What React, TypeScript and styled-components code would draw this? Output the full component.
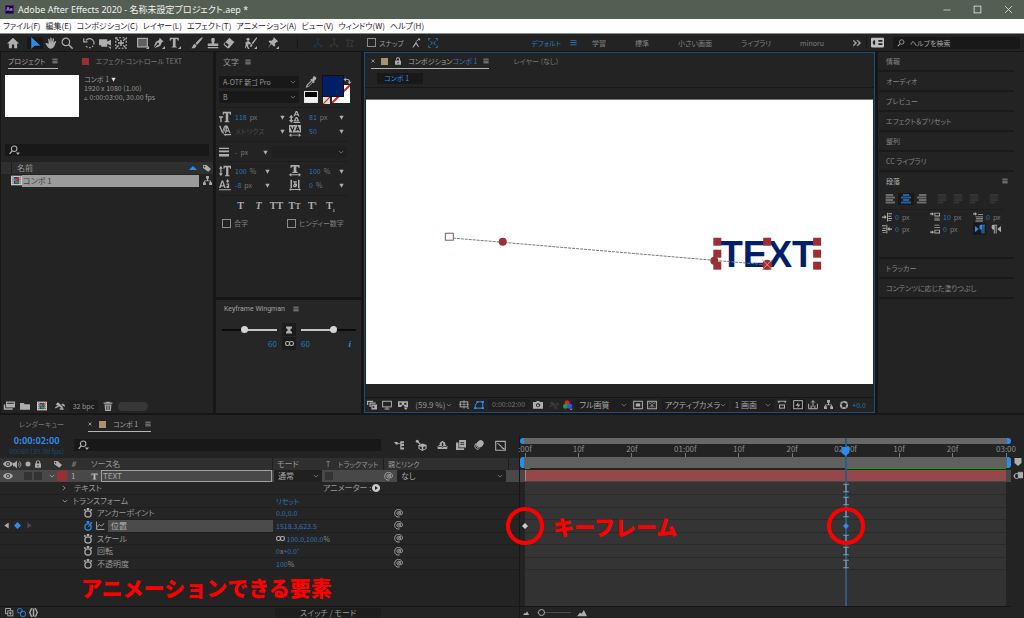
import React from "react";
import styled, { createGlobalStyle, css } from "styled-components";

const c = {
  panel: "#232323",
  gap: "#161616",
  well: "#181818",
  line: "#171717",
  head: "#2f2f2f",
  text: "#989898",
  icon: "#adadad",
  blue: "#2d8ceb",
  value: "#2b75bd",
  focus: "#1f4b78",
  red: "#ff0000",
};

const GlobalStyle = createGlobalStyle`
  * { box-sizing: border-box; }
  body {
    margin: 0;
    background: ${c.gap};
    color: ${c.text};
    font-family: "Noto Sans CJK JP", "Noto Sans", sans-serif;
    font-size: 8px;
    line-height: 12px;
    font-feature-settings: "palt";
  }
  button, input, select { font: inherit; color: inherit; font-feature-settings: inherit; }
  button { margin: 0; padding: 0; border: 0; background: none; }
`;

/* ---------- icons ---------- */

const line = { fill: "none", stroke: "currentColor", strokeWidth: 1.6 } as const;

const icons: Record<string, React.ReactNode> = {
  home: <path d="M8 1 0 8.500h2.500V15h4v-5h3v5h4V8.500H16Z" />,
  arrow: <path d="M3 0v16l4.500-4.500H15Z" />,
  hand: <path d="M5 9 4.200 3.500c-.3-1.300 1.300-1.700 1.700-.4L7 7 7 1.500c0-1.300 1.700-1.300 1.800 0L9.200 7l1.100-4.700c.4-1.200 1.900-.8 1.700.4L11.300 8l2-2.400c.9-.9 2.100-.1 1.500 1-1.500 2.500-2.200 8.400-6.800 8.900C4.200 15.700 3 12.200.8 9.300c-.6-1.200.8-1.900 1.700-1Z" />,
  zoom: <g {...line}><circle cx="6.500" cy="6.500" r="5" /><path d="m10 10 5.500 5.500" strokeWidth="2" /></g>,
  search: <g {...line}><circle cx="9.500" cy="6" r="4.500" /><path d="M6 9.500 1.500 14.500" strokeWidth="2.200" /></g>,
  searchMenu: <g><g {...line}><circle cx="7.500" cy="5.500" r="4" /><path d="M4.500 8.500 1 13" strokeWidth="2" /></g><path d="M10 11h6l-3 3.500Z" /></g>,
  rotate: <g {...line}><path d="M4 4.500A6 6 0 1 1 4 12" strokeDasharray="16 2 2 2 2 2" /><path d="M1 1.500v5h5" /></g>,
  camera: <path d="M0 3h11v3l5-2.500v8L11 9v4H3v-2H0Zm12 10h4v3Z" />,
  panBehind: <g {...line} strokeDasharray="2.500 2"><rect x="1" y="1" width="14" height="14" /><path d="M8 4v8M4 8h8" strokeWidth="2" strokeDasharray="none" /><path d="m2 2 3 3M14 2l-3 3M2 14l3-3M14 14l-3-3" strokeDasharray="none" /></g>,
  rect: <g><rect x="0.800" y="1.800" width="13" height="11.500" fill="#5f5f5f" stroke="currentColor" strokeWidth="1.500" /><path d="M16 12v4h-4Z" /></g>,
  pen: <g><path d="m9 1 5 5-2 1-2.500 5L2 15l4-4.500a1.500 1.500 0 1 0-1-1L1 14 3.500 6.500 8 4Z" /><path d="M16 12v4h-4Z" /></g>,
  type: <g><path d="M1 1h12v4h-1.200c-.3-1.700-.8-2.300-3-2.300v9c0 1 .4 1.300 1.700 1.300v1H3.500v-1c1.300 0 1.700-.3 1.700-1.300v-9c-2.200 0-2.700.6-3 2.300H1Z" /><path d="M16 12v4h-4Z" /></g>,
  glyphT: <path d="M1 1h14v4.500h-1.400c-.3-2-1-2.700-3.600-2.700v9c0 1 .4 1.400 2 1.400V15H4v-1.800c1.600 0 2-.4 2-1.400v-9c-2.600 0-3.300.7-3.600 2.700H1Z" />,
  brush: <path d="M15.500.5c1 1-6 9-7.500 10L6 8.500C7.500 6.500 14.500-.5 15.500.5ZM5.300 9.200l2 2c-.5 3-3.300 4.300-6.800 3.800C2.500 13.500 2 9.500 5.300 9.200Z" />,
  stamp: <path d="M5.500 3.500a2.500 2.500 0 1 1 5 0c0 1.500-1 2.500-1 5H15v3.500H1V8.500h5.500c0-2.500-1-3.500-1-5ZM1 13.300h14V15H1Z" />,
  eraser: <path d="m8.500 1 6.500 5.500-7 8.500H6L1 10.500V9Zm-1 9L3.500 7 2 9.500 6.500 13Z" />,
  roto: <g><circle cx="4" cy="3" r="2" /><path d="M0 8 4 5l3 2 1 2-2 1-1-1-1 3 2 4H4l-2-4-1 3H0l1-6ZM15.500 0 9 8l1.500 1.500L16 2ZM8.500 9l1.500 1.500c0 2-2 3-4 2.500 1.500-1 1-3.500 2.500-4Z" /><path d="M16 12v4h-4Z" /></g>,
  pin: <g><path d="m9 0 6 6-2 .5-2.500 2.500.5 2.500-1.500 1.500-3.500-3.500L1 15l4-6-3-3 1.500-1.500L6 5l2.500-2.500Z" /><path d="M16 12v4h-4Z" /></g>,
  axis: <g {...line}><path d="M8 1v8M8 9l-6 5M8 9l6 5" /><path d="M6 3 8 1l2 2M2 11v3h3M14 11v3h-3" /></g>,
  axisView: <g {...line}><path d="m2 3 11 1-3 6 3 4-10-1 3-5Z" /></g>,
  snapEdge: <g><path d="M2 15 8 6l5 8h-2L8 9.500 4 15Z" /><path d="m8 6 4-4" {...line} /><circle cx="13" cy="2" r="1.800" /></g>,
  snapGrid: <g {...line}><path d="M1 4V1h3M12 1h3v3M15 12v3h-3M4 15H1v-3M4 5l3 3-3 3M12 5 9 8l3 3" /></g>,
  menu: <g><path d="M1 2h14v2.200H1ZM1 7h14v2.200H1ZM1 12h14v2.200H1Z" /></g>,
  more: <path d="m1 2 6.500 6L1 14l-1-1 4.500-5L0 3Zm8 0 6.500 6L9 14l-1-1 4.500-5L8 3Z" stroke="currentColor" />,
  badge: <g><rect y="2" width="16" height="12" rx="1" /><path d="M5 5a3 3 0 1 0 .1 6ZM9 5h5v2H9ZM9 9h5v2H9Z" fill="#232323" /></g>,
  min: <path d="M1 8h14" {...line} />,
  max: <rect x="2" y="2" width="12" height="12" {...line} />,
  close: <path d="m2 2 12 12M14 2 2 14" {...line} />,
  closeTab: <path d="m2 2 12 12M14 2 2 14" {...line} strokeWidth="3" />,
  chevron: <path d="m2 5 6 6 6-6" {...line} strokeWidth="2" />,
  chevronRight: <path d="m5 2 6 6-6 6" {...line} strokeWidth="2" />,
  caret: <path d="M1 2h14L8 15Z" />,
  up: <path d="m8 4 8 8H0Z" />,
  tag: <path d="M0 2h7l9 8-5.500 5.500L0 8Zm3 1.500a1.500 1.500 0 1 0 .1 0Z" fillRule="evenodd" />,
  flow: <path d="M5.500 0h5v5H9v3h5v3h2v5h-5v-5h1.500V9.500h-9V11H5v5H0v-5h2V8h5V5H5.500Z" />,
  comp: <g><rect y="1" width="16" height="14" fill="#c9c9c9" /><path d="M2 3h1M2 6h1M2 9h1M2 12h1M13 3h1M13 6h1M13 9h1M13 12h1" stroke="#333" strokeWidth="1.500" /><path d="M4 3h8v10H4Z" fill="#3b3b3b" /><circle cx="9.500" cy="6" r="2.500" fill="#d22" /><circle cx="6" cy="7" r="2.200" fill="#3b7be0" /><path d="M6 9h5v3H6Z" fill="#2f9a5c" /></g>,
  interpret: <path d="M4 2h12v8H4Zm1.500 1.500v1.500h9V3.500ZM1 6h2v5h10v2H1Z" fillRule="evenodd" />,
  folder: <path d="M0 3h6l1.500 2H16v9H0Z" />,
  adjust: <path d="m1 5 4-3 8 8-2 1.500ZM0 10l5-3 1 2-5 3Zm10-5c3-2 6 0 6 4l-3-1Zm-3 7 6-1 1 3H8Z" />,
  trash: <path d="M5.500 1h5v1.500H15v2H1v-2h4.500ZM2.500 5.500h11L12.500 16h-9ZM5.300 7v7.500h1V7Zm2.200 0v7.500h1V7Zm2.200 0v7.500h1V7Z" fillRule="evenodd" />,
  dropper: <path d="M11 1c2-2 5.500 1.500 3.500 3.500L12 7l1 1-1.500 1.500-1-1-6 6-3.500 1 1-3.500 6-6-1-1L8.500 3.500l1 1Zm-2 6-5.500 5.500v1h1L10 8Z" fillRule="evenodd" />,
  swap: <path d="M5 1v2.500h3c3 0 4.500 1.500 4.500 5H15L11.500 13 8 8.500h2.500c0-2-.5-3-2.500-3H5V8L1 4.500Z" />,
  size: <path d="M5 1h11v4h-1.200c-.2-1.500-.7-2-2.500-2v9.500c0 1 .3 1.200 1.500 1.200V15H7.500v-1.300c1.200 0 1.500-.2 1.500-1.200V3C7 3 6.400 3.500 6.200 5H5ZM0 7h5.500v2H3.500v6H1.700V9H0Z" />,
  leading: <g><path d="M9 0h2l3 7h-1.500L11.700 5.500H8.300L7.500 7H6Zm0 4.300h2L10 1.800ZM9 8h2l3 6H6Zm-.3 4.500h2.600L10 9.500ZM6 14.500h9V16H6Z" fillRule="evenodd" /><path d="M3 5 6 9H4v3h2l-3 4-3-4h2V9H0Z" /></g>,
  kerning: <path d="M0 1h2l2.500 7L7 1h1.500L4.500 11H4Zm9.500 0h2L15.500 11H14l-.8-2.500H10L9.500 11H8Zm1 2.500L10.300 7h2.400ZM9 0h1L6 12H5ZM7 12h9v1.500H9V15l-3-2.500L9 10.500Z" />,
  tracking: <g><rect y="0" width="16" height="10" /><path d="m2 2 2.500 6L7 2M9 8l2.500-6L14 8M10 6.200h3" stroke="#232323" strokeWidth="1.500" fill="none" /><path d="M0 13.500 3 11v2h10v-2l3 2.500L13 16v-2H3v2Z" /></g>,
  stroke: <path d="M0 1h16v2H0ZM0 5.500h16v3H0ZM0 11h16v4H0Z" />,
  vscale: <path d="M2.500 1 5 5H3.300v6H5l-2.500 4L0 11h1.700V5H0ZM6 1h10v4h-1.200c-.2-1.500-.7-2-2.300-2v9.500c0 1 .3 1.200 1.500 1.200V15H8v-1.300c1.200 0 1.500-.2 1.500-1.200V3C7.800 3 7.400 3.500 7.200 5H6Z" />,
  hscale: <path d="M2 0h12v4h-1.200c-.3-1.500-1-2-3-2v6c0 1 .4 1.200 1.700 1.200v1.300h-7V9.200C5.800 9.200 6.200 9 6.200 8V2c-2 0-2.700.5-3 2H2ZM0 13l3-2.500v1.700h10v-1.700l3 2.500-3 2.500v-1.700H3v1.700Z" />,
  baseline: <path d="M3.500 2h2L9 12H7l-.6-2H2.700L2 12H0Zm-.3 6.300h2.600L4.500 4ZM10 6h3.500v6H10V9h2V7.500h-2ZM0 13.500h16V15H0ZM11.500 0 14 3.500h-1.700V5h-1.600V3.500H9Z" />,
  tsume: <path d="M2 1h2v11H2ZM12 1h2v11h-2ZM5.500 3h5v1.500h-2V6h1.500c1.500 1.500 1 5-2 5S5 9 6 7.500L7 6V4.500H5.500ZM7 8v1.500L8.500 8ZM0 14l3-2v1.300h10V12l3 2-3 2v-1.300H3V16Z" />,
  reset: <path d="M2 1h12v3l-4 4 4 4v3H2v-3l4-4-4-4Z" />,
  link: <g {...line} strokeWidth="2"><rect x="1" y="4.500" width="7" height="7" rx="3" /><rect x="8" y="4.500" width="7" height="7" rx="3" /></g>,
  preview: <path d="M0 1h10v2H2v5H0Zm4 3h10v2H6v5H4Zm3 3h9v8H7Zm2 2v4l4-2Z" fillRule="evenodd" />,
  monitor: <g {...line}><rect x="1" y="2" width="14" height="9" /><path d="M8 11v3M4 14.500h8" /></g>,
  goggles: <g><path d="M0 2h16v9h-5L9 8.500H7L5 11H0Zm2.500 2.500v3h3.500v-3Zm7.500 0v3h3.500v-3Z" fillRule="evenodd" /><path d="M9 12h7l-3.500 4Z" /></g>,
  region: <g {...line}><rect x="2" y="3" width="12" height="8" /><path d="M8 0v14M0 7h16" strokeWidth="1" /><path d="M13 13h3" /></g>,
  mask: <g {...line}><path d="M2 13V8l4-5h8v10Z" /><path d="M0 13h4M12 13h4M12 3h4M4 3h3" strokeWidth="3" /></g>,
  photo: <path d="M5 3 6 1.500h4L11 3h5v11H0V3Zm3 2.200a3.300 3.300 0 1 0 .1 0Zm0 1.500a1.800 1.800 0 1 1-.1 0Z" fillRule="evenodd" />,
  channels: <g><circle cx="6.500" cy="4.500" r="4" fill="#e02020" /><circle cx="4" cy="10" r="4" fill="#1fa02f" /><circle cx="10.500" cy="9.500" r="4" fill="#3050ff" /><path d="M10 14h6l-3 2Z" /></g>,
  safe: <g><rect x="1" y="2" width="14" height="12" {...line} /><rect x="4.500" y="5.500" width="7" height="5" /></g>,
  checker: <g {...line}><rect x="1" y="2" width="14" height="12" /><path d="m3 4 10 8M13 4 3 12M8 3v3M8 10v3" strokeDasharray="2 1" /></g>,
  pixel: <g {...line}><path d="M1 2h14M3 2v3M13 2v3" /><rect x="4" y="8" width="8" height="5" /></g>,
  fast: <g><rect x="1" y="1" width="14" height="13" {...line} /><path d="m9 3-5 6h4l-1 4 5-6H8Z" /></g>,
  timeline: <g {...line}><path d="M1 6v8h14V6M5 9v5M11 9v5M8 11V1M5 4l3-3 3 3" /></g>,
  aperture: <g {...line} strokeWidth="3"><circle cx="8" cy="8" r="5" /><path d="m5 2 3 3M14 6l-4 1M12 14l-2-4M4 13l3-3M2 6l4 1" strokeWidth="1" stroke="#232323" /></g>,
  mini: <path d="M0 3h6v2h4V2h6v3h-4v1.500h4v3h-4V12h4v3h-6V6.500H6V7H3Z" />,
  cube: <g><circle cx="3" cy="3" r="2" /><path d="m4 4 3 3" {...line} /><path d="m10 6 5.500 2v5L10 16l-5.500-3V8Zm-4 3.500v3l3 1.500v-3.500Zm8 0-3 1V14l3-1.500Z" fillRule="evenodd" /></g>,
  shy: <path d="M1 13V9l3-2V4l4-3 4 3v3l3 2v4ZM7 4v7h2V4ZM0 9h16v1.300H0Z" fillRule="evenodd" />,
  frames: <path d="M5 0h11v12H5Zm2 3v1.500h6V3Zm0 3v1.500h6V6ZM0 4h4v9h9v3H0Z" fillRule="evenodd" />,
  blur: <g><ellipse cx="10" cy="6" rx="5" ry="6" transform="rotate(35 10 6)" /><path d="M3.500 5C0 9 1 15 7 15M6 3.500C2 8 4 13 9 13" {...line} /></g>,
  graph: <g {...line}><path d="M1 2h14v13H1ZM3 5c5 0 5 7 11 8" /></g>,
  eye: <path d="M8 3c4 0 7 3 8 5-1 2-4 5-8 5S1 10 0 8c1-2 4-5 8-5Zm0 1.800a3.200 3.200 0 1 0 .1 0Zm0 1.700a1.500 1.500 0 1 1-.1 0Z" fillRule="evenodd" />,
  speaker: <g><path d="M0 5h3l4-4v14l-4-4H0Z" /><path d="M9 5c2 2 2 4 0 6M11 2.500c4 3 4 8 0 11" {...line} /></g>,
  dot: <circle cx="8" cy="8" r="5" />,
  lock: <path d="M2 7h1.500V4.500C3.500-.5 12.500-.5 12.500 4.500V7H14v8.500H2Zm3.500 0h5V4.500c0-2.500-5-2.500-5 0ZM7 10v3h2v-3Z" fillRule="evenodd" />,
  unlock: <path d="M2 7h8V4.500c0-2.500-4-2.500-4 0V5.500H4V4C4-.5 12-.5 12 4V7h2v8.500H2Zm5 3v3h2v-3Z" fillRule="evenodd" />,
  watch: <g><circle cx="8" cy="9.500" r="5" {...line} strokeWidth="2" /><path d="M6 0h4v3H6ZM1 3l2-2 2 2-2 2ZM11 3l2-2 2 2-2 2Z" /></g>,
  watchOn: <g><circle cx="8" cy="9.500" r="5" {...line} strokeWidth="2" /><path d="M6 0h4v3H6ZM11 3l2-2 2 2-2 2Z" /><path d="m8 10 4-4" {...line} /></g>,
  graphOn: <g {...line}><path d="M1 1v14h14M3 11c3-12 5 5 11-7" /></g>,
  spiral: <path d="M11 5C8 2.500 4.500 5 5.500 8.500S11.500 11 11 8 7 6 7.500 8.500M11 3.500v5c0 3 4 2 4-1.500 0-6-9-9-12.500-3.500S3 16 10 14" {...line} />,
  play: <path d="M8 0a8 8 0 1 0 .1 0ZM6 4l6 4-6 4Z" fillRule="evenodd" />,
  left: <path d="M13 1v14L3 8Z" />,
  right: <path d="M3 1v14l10-7Z" />,
  diamond: <path d="m8 0 8 8-8 8-8-8Z" />,
  ibeam: <path d="M3 1h4l1 1 1-1h4M3 15h4l1-1 1 1h4M8 2v12" {...line} strokeWidth="2.200" />,
  marker: <path d="M1 0h14v10l-7 6-7-6Z" />,
  camLayer: <g><circle cx="6" cy="8" r="4" {...line} /><path d="M8 2h8v9H9ZM0 8h4" stroke="currentColor" /></g>,
  hills: <path d="m0 13 5-6 2 2 4-6 5 10Z" />,
  layers: <g {...line}><rect x="1" y="1" width="9" height="9" /><rect x="5" y="5" width="9" height="9" fill="#232323" /><path d="M7 9h5M9.500 7v5" /></g>,
  toggles: <g {...line}><rect x="1" y="1" width="8" height="8" rx="3" /><rect x="6" y="6" width="9" height="9" rx="3" /></g>,
  braces: <path d="M6 1C2 1 4 6 1 8c3 2 1 7 5 7M10 1c4 0 2 5 5 7-3 2-1 7-5 7M8 1v14" {...line} strokeWidth="2.500" />,
  alignL: <path d="M1 0h12v3H1ZM1 4h15v3H1ZM1 8h12v3H1ZM1 12h15v3H1Z" />,
  alignC: <path d="M3 0h10v3H3ZM0 4h16v3H0ZM3 8h10v3H3ZM0 12h16v3H0Z" />,
  alignR: <path d="M3 0h12v3H3ZM0 4h15v3H0ZM3 8h12v3H3ZM0 12h15v3H0Z" />,
  justify: <path d="M1 0h14v3H1ZM1 4h14v3H1ZM1 8h14v3H1ZM1 12h9v3H1Z" />,
  indentL: <path d="M0 7h4V4.500L7.500 8 4 11.500V9H0ZM8 1h1.500v14H8ZM10 2h6v1.500h-6ZM10 6h5v1.500h-5ZM10 9.500h6V11h-6ZM10 13h5v1.500h-5Z" />,
  indentR: <path d="M16 7h-4V4.500L8.500 8l3.500 3.500V9h4ZM7 1h1.500v14H7ZM0 2h6v1.500H0ZM1 6h5v1.500H1ZM0 9.500h6V11H0ZM1 13h5v1.500H1Z" />,
  before: <path d="M0 2h3V0l3.500 3L3 6V4H0ZM7 1h9v6H7Zm1.500 1.500v3h6v-3ZM7 9h8v1.500H7ZM7 12h9v1.500H7Z" fillRule="evenodd" />,
  after: <path d="M0 12h3v-2l3.500 3L3 16v-2H0ZM7 9h9v6H7Zm1.500 1.500v3h6v-3ZM7 1h8v1.500H7ZM7 5h9v1.500H7Z" fillRule="evenodd" />,
  first: <path d="M0 2h3V0l3.500 3L3 6V4H0ZM8 3h8v1.500H8ZM4 7h12v1.500H4ZM5 10h11v1.500H5ZM4 13.500h12V15H4Z" />,
  ltr: <path d="m0 3 6 5-6 5ZM9.500 1H16v1.500h-1V15h-1.500V2.500H12V15h-1.500V9C6 9 6 1 9.500 1Z" />,
  rtl: <path d="m16 3-6 5 6 5ZM3.500 1H10v1.500H9V15H7.500V2.500H6V15H4.500V9C0 9 0 1 3.500 1Z" />,
};

const Svg = styled.svg<{ $s: number; $c?: string }>`
  display: block;
  flex: none;
  width: ${(p) => p.$s}px;
  height: ${(p) => p.$s}px;
  color: ${(p) => p.$c ?? c.icon};
  fill: currentColor;
`;

const Icon = ({ n, s = 10, color }: { n: string; s?: number; color?: string }) => (
  <Svg viewBox="0 0 16 16" $s={s} $c={color} aria-hidden="true">{icons[n]}</Svg>
);

const IconButton = styled.button<{ $w?: number; $on?: boolean }>`
  display: flex;
  flex: none;
  align-items: center;
  justify-content: center;
  width: ${(p) => p.$w ?? 16}px;
  height: 12px;
  background: ${(p) => (p.$on ? c.well : "transparent")};
`;

const Tool = ({ n, s, w, on, color, label }: { n: string; s?: number; w?: number; on?: boolean; color?: string; label: string }) => (
  <IconButton type="button" $w={w} $on={on} aria-label={label}><Icon n={n} s={s} color={color} /></IconButton>
);

/* ---------- shared pieces ---------- */

const Row = styled.div<{ $gap?: number }>`
  display: flex;
  align-items: center;
  gap: ${(p) => p.$gap ?? 0}px;
`;

const Spacer = styled.div`flex: 1;`;

const Swatch = styled.span<{ $c: string }>`
  flex: none;
  width: 7px;
  height: 7px;
  background: ${(p) => p.$c};
`;

const Panel = styled.section`
  display: flex;
  flex-direction: column;
  min-width: 0;
  background: ${c.panel};
`;

const Tabs = styled.div`
  display: flex;
  flex: none;
  align-items: flex-end;
  height: 18px;
  font-size: 7px;
  white-space: nowrap;
`;

const Tab = styled.div<{ $on?: boolean; $gap?: number }>`
  display: flex;
  align-items: center;
  gap: ${(p) => p.$gap ?? 7}px;
  height: 15px;
  padding-bottom: 1px;
  color: ${(p) => (p.$on ? "#a2a2a2" : "#787878")};
  ${(p) => p.$on && css`box-shadow: inset 0 -1px #b5b5b5;`}
`;

const SelectBox = styled.label<{ $w: number; $bg?: string }>`
  position: relative;
  display: flex;
  flex: none;
  align-items: center;
  width: ${(p) => p.$w}px;
  height: 12px;
  background: ${(p) => p.$bg ?? c.well};
  border-radius: 1px;
  select {
    width: 100%;
    height: 12px;
    padding: 0 0 0 4px;
    border: 0;
    appearance: none;
    background: none;
    outline: none;
  }
  svg {
    position: absolute;
    right: 3px;
    top: 3px;
    pointer-events: none;
  }
`;

const Select = ({ w, value, label, bg }: { w: number; value: string; label: string; bg?: string }) => (
  <SelectBox $w={w} $bg={bg}>
    <select aria-label={label} defaultValue={value}><option>{value}</option></select>
    <Icon n="chevron" s={6} color="#858585" />
  </SelectBox>
);

const SearchBox = styled.label`
  display: flex;
  flex: 1;
  align-items: center;
  gap: 5px;
  height: 12px;
  padding: 0 4px;
  background: ${c.well};
  input {
    flex: 1;
    min-width: 0;
    height: 12px;
    padding: 0;
    border: 0;
    background: none;
    outline: none;
    &::placeholder { color: #a5a5a5; opacity: 1; }
  }
`;

const Check = styled.label`
  display: flex;
  align-items: center;
  gap: 3px;
  font-size: 7px;
  input {
    width: 9px;
    height: 9px;
    margin: 0;
    border: 1px solid #8b8b8b;
    appearance: none;
  }
`;

/* ---------- window chrome ---------- */

const Shell = styled.div`
  display: flex;
  flex-direction: column;
  min-height: 100vh;
`;

const TitleBar = styled.header`
  display: flex;
  align-items: center;
  height: 19px;
  padding-left: 5px;
  gap: 4px;
  background: #545f54;
  color: #f0f0f0;
  h1 {
    margin: 0;
    font: 400 9px/18px "Noto Sans", "Noto Sans CJK JP", sans-serif;
    font-feature-settings: "palt";
  }
`;

const Logo = styled.span`
  width: 9px;
  height: 9px;
  border: 1px solid #3b2a66;
  background: #1b0636;
  color: #b79bff;
  font: 700 5px/7px "Noto Sans", sans-serif;
  text-align: center;
`;

const MenuBar = styled.nav`
  display: flex;
  align-items: center;
  gap: 5px;
  height: 15px;
  padding: 0 3px;
  background: #fff;
  border-bottom: 1px solid #8b8b8b;
  color: #1c1c1c;
  white-space: nowrap;
`;

const ToolBar = styled.div`
  display: flex;
  align-items: center;
  height: 17px;
  padding: 0 4px 0 5px;
  background: ${c.panel};
  white-space: nowrap;
`;

const ToolGroup = styled.div`
  display: flex;
  margin-right: 6px;
`;

const GhostGroup = styled.div`
  display: flex;
  margin: 0 9px 0 10px;
  padding-left: 12px;
  border-left: 1px solid ${c.line};
`;

const Workspaces = styled.nav`
  display: flex;
  align-items: center;
  gap: 29px;
  padding-right: 5px;
  margin-right: 4px;
  border-right: 1px solid ${c.line};
  color: #808080;
  font-size: 7px;
`;

const CurrentSpace = styled.button`
  display: flex;
  align-items: center;
  gap: 9px;
  margin-right: -14px;
  color: ${c.value};
`;

const HelpSearch = styled.div`
  display: flex;
  width: 127px;
  margin-left: 10px;
  font-size: 7px;
`;

const Main = styled.main`
  display: flex;
  flex: 1;
  gap: 3px;
  margin: 1px 0 2px 1px;
`;

/* ---------- project panel ---------- */

const ProjectPanel = styled(Panel)`width: 212px; flex: none;`;

const ProjectTabs = styled(Tabs)`
  padding: 0 3px 1px 7px;
  gap: 24px;
`;

const CompInfo = styled.div`
  display: flex;
  gap: 5px;
  padding: 5px 4px 0;
  font-size: 7px;
  line-height: 9px;
`;

const Thumb = styled.div`
  width: 74px;
  height: 42px;
  background: #fff;
`;

const ProjectSearch = styled.div`
  display: flex;
  margin: 27px 4px 6px;
`;

const ListHead = styled.div`
  display: flex;
  align-items: center;
  gap: 4px;
  height: 12px;
  padding-left: 10px;
  background: ${c.head};
  > span { flex: 1; padding-left: 5px; border-left: 1px solid #1e1e1e; }
`;

const ListItem = styled.div`
  display: flex;
  align-items: center;
  height: 13px;
  padding-left: 10px;
`;

const ListName = styled.span`
  flex: 1;
  margin-right: 2px;
  padding-left: 1px;
  background: #9b9b9b;
  color: #444;
`;

const ProjectFoot = styled.div`
  display: flex;
  align-items: center;
  height: 12px;
  margin-bottom: 1px;
`;

const Depth = styled.button`
  width: 29px;
  margin-right: 2px;
  font-size: 7px;
  background: #1e1e1e;
`;

const Pill = styled.span`
  width: 30px;
  height: 9px;
  margin-left: 2px;
  border-radius: 5px;
  background: #373737;
`;

/* ---------- character panel ---------- */

const MidColumn = styled.div`
  display: flex;
  flex: none;
  flex-direction: column;
  gap: 3px;
  width: 145px;
`;

const CharPanel = styled(Panel)`
  flex: 1;
  padding: 0 14px 0 3px;
`;

const CharTitle = styled.div`
  display: flex;
  align-items: center;
  gap: 6px;
  height: 20px;
  padding-left: 4px;
`;

const FontRows = styled.div`
  display: flex;
  gap: 5px;
  padding: 4px 0 4px;
  border-bottom: 1px solid #1d1d1d;
  font-size: 7px;
`;

const Stack = styled.div`
  display: flex;
  flex-direction: column;
  align-items: center;
  gap: 3px;
`;

const BlackWhite = styled.button`
  width: 14px;
  height: 12px;
  border: 1px solid #e8e8e8;
  background: linear-gradient(#000 0 5px, #f2f2f2 5px);
`;

const Colors = styled.div`
  position: relative;
  flex: 1;
`;

const FillSwatch = styled.button`
  position: absolute;
  left: 0;
  top: 0;
  width: 20px;
  height: 20px;
  background: #001f66;
  outline: 1px solid #111;
`;

const StrokeSwatch = styled.svg`
  position: absolute;
  left: 9px;
  top: 9px;
  width: 18px;
  height: 18px;
`;

const SwapButton = styled(IconButton)`
  position: absolute;
  left: 20px;
  top: -1px;
  width: 9px;
`;

const NoneSwatch = styled(StrokeSwatch)`
  left: 0;
  top: 21px;
  width: 7px;
  height: 7px;
`;

const CharBlock = styled.div`
  display: grid;
  grid-template-columns: 12px 50px 12px 1fr;
  column-gap: 4px;
  grid-auto-rows: 14px;
  align-items: center;
  padding: 2px 3px 3px 0;
  border-bottom: 1px solid #1d1d1d;
  font-size: 7px;
  > :nth-child(4n) { padding-left: 4px; }
`;

const Field = styled.div<{ $pull?: boolean }>`
  display: flex;
  align-items: center;
  justify-content: space-between;
  color: #777;
  ${(p) => p.$pull && css`margin-right: 15px;`}
  b { font-weight: 400; color: ${c.value}; margin-right: 3px; }
  i { font-style: normal; color: #4a4a4a; }
`;

const CharField = ({ v, u, pull }: { v: string; u?: string; pull?: boolean }) => (
  <Field $pull={pull}><span><b>{v}</b>{u}</span><Icon n="caret" s={5} /></Field>
);

const StrokeBlock = styled.div`
  display: flex;
  align-items: center;
  gap: 4px;
  padding: 4px 0 3px;
  border-bottom: 1px solid #1d1d1d;
  font-size: 7px;
  > div:nth-child(2) { width: 38px; padding-left: 2px; }
`;

const TypeStyles = styled.div`
  display: flex;
  gap: 3px;
  padding: 3px 0 0 14px;
  button {
    width: 15px;
    height: 14px;
    color: ${c.icon};
    font: 700 10px/14px "Liberation Serif", serif;
  }
  sup, sub { font-size: 5px; line-height: 5px; }
  small { font-size: 8px; }
`;

const CheckRow = styled.div`
  display: grid;
  grid-template-columns: 65px 1fr;
  margin: 4px 0 0 3px;
  color: #808080;
`;

/* ---------- keyframe wingman ---------- */

const Wingman = styled(Panel)`
  height: 113px;
  padding: 0 6px;
  background: #262626;
`;

const WingHead = styled.div`
  display: flex;
  align-items: center;
  gap: 8px;
  height: 18px;
  padding-left: 2px;
  font-family: Roboto, sans-serif;
  font-size: 7px;
  color: #a0a0a0;
`;

const WingGrid = styled.div`
  display: grid;
  grid-template-columns: 55px 14px 55px;
  column-gap: 5px;
  row-gap: 1px;
  align-items: center;
  padding-top: 5px;
  color: #1f7fb5;
`;

const Range = styled.input<{ $at: number; $flip?: boolean }>`
  width: 100%;
  height: 8px;
  margin: 0;
  appearance: none;
  background: linear-gradient(
      90deg,
      ${(p) => (p.$flip ? "#c4c4c4" : "#0b0b0b")} ${(p) => p.$at}%,
      ${(p) => (p.$flip ? "#0b0b0b" : "#c4c4c4")} ${(p) => p.$at}%
    ) center / 100% 2px no-repeat;
  &::-webkit-slider-thumb {
    appearance: none;
    width: 7px;
    height: 7px;
    border-radius: 50%;
    background: #d5d5d5;
  }
`;

const WingButton = styled.button`
  display: flex;
  align-items: center;
  justify-content: center;
  height: 13px;
  background: #1b1b1b;
`;

const WingNumber = styled.span<{ $end?: boolean }>`
  display: flex;
  justify-content: ${(p) => (p.$end ? "flex-end" : "space-between")};
  padding-right: ${(p) => (p.$end ? 0 : 5)}px;
  em { color: #1e9ad6; font: italic 700 9px/12px "Liberation Serif", serif; }
`;

/* ---------- viewer ---------- */

const Viewer = styled(Panel)`
  flex: 1;
  border: 1px solid ${c.focus};
`;

const ViewerTabs = styled(Tabs)`
  padding: 0 6px 1px;
  gap: 24px;
  height: 17px;
  b { font-weight: 400; color: ${c.value}; }
`;

const Crumbs = styled.div`
  height: 18px;
  padding: 3px 12px 0;
  border-bottom: 1px solid ${c.line};
  span {
    display: block;
    width: 46px;
    height: 11px;
    padding-left: 7px;
    background: ${c.well};
    color: ${c.blue};
    font-size: 7px;
    line-height: 11px;
  }
`;

const Stage = styled.div`
  flex: 1;
  margin: 11px 1px 13px;
  display: flex;
  background: #fff;
  border-top: 1px solid #777;
  svg { display: block; width: 100%; height: 100%; }
`;

const ViewerFoot = styled.div`
  display: flex;
  align-items: center;
  justify-content: space-between;
  height: 15px;
  padding: 0 8px 1px 0;
  border-top: 1px solid ${c.line};
  white-space: nowrap;
`;

const FootSelects = styled(Row)`
  color: #a5a5a5;
`;

const TimeChip = styled.button`
  width: 42px;
  height: 11px;
  background: #1e1e1e;
  color: #757575;
  font-size: 7px;
  line-height: 11px;
`;

const Exposure = styled.button`
  color: ${c.value};
  font-size: 7px;
`;

const handles = [
  [352, 142], [402, 142], [452, 142], [352, 154], [452, 154], [352, 166], [402, 166], [452, 166],
];

const Canvas = () => (
  <svg viewBox="0 0 508 285" role="img" aria-label="コンポ 1">
    <text x="355" y="167" fontFamily="Liberation Sans, sans-serif" fontWeight="700" fontSize="37" fill="#001f66">TEXT</text>
    <path d="M83 138 400 165" stroke="#777" strokeDasharray="3 1" fill="none" />
    <rect x="79.500" y="133.500" width="8" height="7" fill="#fff" stroke="#8c5a5c" />
    <g fill="#9c3034">
      <circle cx="137" cy="142" r="4" />
      <circle cx="349" cy="161" r="4" />
      <circle cx="402" cy="165" r="5" />
      {handles.map(([x, y]) => <rect key={`${x}-${y}`} x={x - 4} y={y - 4} width="8" height="8" />)}
    </g>
    <path d="m397 160 10 10M407 160l-10 10" stroke="#d99" strokeWidth="1" />
  </svg>
);

/* ---------- right column ---------- */

const SideColumn = styled(Panel)`
  flex: none;
  width: 146px;
  padding: 0 10px 0 1px;
`;

const SideHead = styled.button<{ $open?: boolean }>`
  display: flex;
  align-items: center;
  justify-content: space-between;
  flex: none;
  height: 20px;
  padding: 0 6px 0 7px;
  border-bottom: 2px solid ${(p) => (p.$open ? "transparent" : "#1a1a1a")};
  color: ${(p) => (p.$open ? "#b0b0b0" : "#868686")};
  font-size: 7px;
`;

const ParaBody = styled.div`
  height: 67px;
  padding: 1px 10px 0 3px;
  border-bottom: 2px solid #1a1a1a;
  font-size: 7px;
`;

const AlignRow = styled.div`
  display: flex;
  padding-bottom: 4px;
  border-bottom: 1px solid #1d1d1d;
  > :nth-child(4), > :nth-child(7) { margin-left: 4px; }
`;

const ParaGrid = styled.div`
  display: grid;
  grid-template-columns: 48px 43px 1fr;
  grid-auto-rows: 12px;
  align-items: center;
  padding-top: 1px;
`;

/* ---------- timeline ---------- */

const Timeline = styled.section`
  background: ${c.panel};
`;

const TimelineTabs = styled(Tabs)`
  padding: 0 0 1px 19px;
  gap: 24px;
`;

const TimelineBody = styled.div`
  display: grid;
  grid-template-columns: 520px minmax(0, 1fr);
  padding-top: 3px;
`;

const LayerSide = styled.div`
  display: flex;
  flex-direction: column;
  border-right: 1px solid ${c.line};
`;

const LayerTop = styled.div`
  display: flex;
  align-items: flex-start;
  height: 22px;
  padding: 0 8px;
`;

const TimeCode = styled.button`
  width: 58px;
  margin-right: 9px;
  color: ${c.blue};
  font-size: 9px;
  font-weight: 700;
  line-height: 10px;
  small {
    display: block;
    color: #1d4a76;
    font-size: 7px;
    font-weight: 400;
    line-height: 10px;
  }
`;

const TimelineSearch = styled.div`
  display: flex;
  width: 310px;
  margin: 3px 8px 0 0;
`;

const CompTools = styled.div`
  display: flex;
  align-items: center;
  height: 18px;
  gap: 2px;
`;

const LayerHead = styled.div`
  display: flex;
  align-items: center;
  height: 12px;
  padding-left: 3px;
  background: ${c.head};
  white-space: nowrap;
`;

const Cell = styled.span<{ $w: number; $line?: boolean; $p?: number; $small?: boolean }>`
  display: flex;
  flex: none;
  align-items: center;
  width: ${(p) => p.$w}px;
  height: 12px;
  padding-left: ${(p) => p.$p ?? 0}px;
  ${(p) => p.$line && css`border-left: 1px solid #1e1e1e;`}
  ${(p) => p.$small && css`font-size: 7px;`}
`;

const LayerRow = styled(LayerHead)`
  background: #484848;
  color: #a8a8a8;
`;

const Switch = styled.button`
  width: 8px;
  height: 8px;
  margin-right: 2px;
  background: #333;
`;

const NameBox = styled.span`
  display: flex;
  align-items: center;
  width: 171px;
  height: 12px;
  padding-left: 1px;
  margin-right: 2px;
  border: 1px solid #a0a0a0;
`;

const PropList = styled.div`
  display: grid;
  grid-template-rows: repeat(7, minmax(0, 1fr));
  height: 88px;
`;

const PropRow = styled.div`
  display: flex;
  align-items: center;
  padding-left: 3px;
  border-bottom: 1px solid #1f1f1f;
  background: #252525;
  white-space: nowrap;
`;

const PropName = styled.span<{ $on?: boolean }>`
  display: flex;
  flex: 1;
  align-items: center;
  align-self: stretch;
  padding-left: 3px;
  background: ${(p) => (p.$on ? "#4b4b4b" : "transparent")};
  color: ${(p) => (p.$on ? "#b0b0b0" : c.text)};
`;

const PropLead = styled.span`
  display: flex;
  width: 270px;
  flex: none;
  align-items: center;
  align-self: stretch;
`;

const PropValue = styled.button`
  display: flex;
  align-items: center;
  width: 117px;
  height: 12px;
  padding-left: 3px;
  color: ${c.value};
  font-size: 7px;
  line-height: 12px;
  i { font-style: normal; color: #888; }
`;

const Note = styled.strong`
  color: ${c.red};
  font-size: 21px;
  font-weight: 900;
  line-height: 24px;
  font-feature-settings: normal;
  white-space: nowrap;
`;

const LayerEmpty = styled.div`
  padding: 5px 0 7px 81px;
`;

const LayerFoot = styled.div`
  display: flex;
  align-items: center;
  height: 12px;
  padding-left: 3px;
  border-top: 1px solid ${c.line};
`;

const ModeButton = styled.button`
  width: 106px;
  height: 9px;
  margin-left: 236px;
  background: #1d1d1d;
  line-height: 9px;
`;

const TrackSide = styled.div`
  display: grid;
  grid-template-columns: minmax(0, 1fr) 13px;
  grid-template-rows: 1fr auto;
`;

const Tracks = styled.div`
  position: relative;
  display: flex;
  flex-direction: column;
  padding-top: 2px;
`;

const Gutter = styled.div`
  display: flex;
  flex-direction: column;
  align-items: center;
  gap: 5px;
  padding-top: 22px;
`;

const Bar = styled.div<{ $h: number; $c: string }>`
  height: ${(p) => p.$h}px;
  background: ${(p) => p.$c};
  border: solid ${c.blue};
  border-width: 0 4px;
  border-radius: 3px;
`;

/* Everything inside is placed by its time, as a share of the three seconds shown. */
const TimeSpan = styled.div`
  position: relative;
  margin: 0 5px 0 5px;
`;

const Ruler = styled(TimeSpan)`
  height: 13px;
`;

const Mark = styled.span`
  position: absolute;
  top: 0;
  display: flex;
  flex-direction: column;
  align-items: center;
  width: 40px;
  margin-left: -20px;
  color: #8b8b8b;
  font-size: 8px;
  line-height: 9px;
  &::after { content: ""; width: 1px; height: 4px; background: #777; }
`;

const Cache = styled(TimeSpan)`
  height: 2px;
  background: linear-gradient(90deg, #0aa70a 1%, transparent 1% 67%, #0aa70a 67%) 0 0 / 100% 1px no-repeat;
`;

const LayerBar = styled.div`
  height: 12px;
  padding: 0 5px;
  background: #484848;
  &::after {
    content: "";
    display: block;
    height: 11px;
    border-left: 1px solid #c77;
    background: #96474a;
  }
`;

const TrackArea = styled.div`
  flex: 1;
  margin: 0 5px;
  background: #323232;
`;

const TrackRow = styled.div`
  position: relative;
  border-bottom: 1px solid #2a2a2a;
  background: #343434;
`;

const AtTime = styled.span`
  position: absolute;
  top: 50%;
  z-index: 2;
  transform: translate(-50%, -50%);
`;

const Ring = styled(AtTime)`
  width: 38px;
  height: 38px;
  border: 4px solid ${c.red};
  border-radius: 50%;
  z-index: 3;
`;

const RowNote = styled(Note)`
  position: absolute;
  left: 28px;
  top: -6px;
  z-index: 3;
`;

const PlayLayer = styled.div`
  position: absolute;
  inset: 2px 5px 0;
  z-index: 1;
  pointer-events: none;
`;

const PlayHead = styled.div`
  position: absolute;
  top: 0;
  bottom: 0;
  display: flex;
  justify-content: center;
  width: 10px;
  margin-left: -5px;
  padding-top: 9px;
  background: linear-gradient(#2b5a84, #2b5a84) center / 2px 100% no-repeat;
`;

const TrackFoot = styled.div`
  display: flex;
  align-items: center;
  gap: 5px;
  height: 12px;
  border-top: 1px solid ${c.line};
`;

const ZoomSlider = styled.input`
  width: 34px;
  height: 8px;
  margin: 0;
  appearance: none;
  background: linear-gradient(#4d4d4d, #4d4d4d) center / 100% 1px no-repeat;
  &::-webkit-slider-thumb {
    appearance: none;
    width: 7px;
    height: 7px;
    border: 1px solid ${c.icon};
    border-radius: 50%;
    background: ${c.panel};
  }
`;

/* ---------- data ---------- */

const menus = ["ファイル(F)", "編集(E)", "コンポジション(C)", "レイヤー(L)", "エフェクト(T)", "アニメーション(A)", "ビュー(V)", "ウィンドウ(W)", "ヘルプ(H)"];
const toolGroups = [["home"], ["arrow", "hand", "zoom"], ["rotate", "camera", "panBehind"], ["rect", "pen", "type"], ["brush", "stamp", "eraser"], ["roto"], ["pin"]];
const spaces = ["学習", "標準", "小さい画面", "ライブラリ", "minoru"];
const sides = ["情報", "オーディオ", "プレビュー", "エフェクト＆プリセット", "整列", "CC ライブラリ"];
const marks = [":00f", "10f", "20f", "01:00f", "10f", "20f", "02:00f", "10f", "20f", "03:00"];
const props: { name: string; value: React.ReactNode; on?: boolean }[] = [
  { name: "アンカーポイント", value: "0.0,0.0" },
  { name: "位置", value: "1518.3,623.5", on: true },
  { name: "スケール", value: <><Icon n="link" s={9} />&nbsp;100.0,100.0<i>%</i></> },
  { name: "回転", value: <>0<i>x</i>+0.0°</> },
  { name: "不透明度", value: <>100<i>%</i></> },
];
const current = "66.7%";

export default function App() {
  return (
    <Shell>
      <GlobalStyle />
      <TitleBar>
        <Logo>Ae</Logo>
        <h1>Adobe After Effects 2020 - 名称未設定プロジェクト.aep *</h1>
        <Spacer />
        <Row>
          <Tool n="min" w={31} s={8} color="#d5d9d5" label="最小化" />
          <Tool n="max" w={31} s={9} color="#d5d9d5" label="最大化" />
          <Tool n="close" w={31} s={9} color="#d5d9d5" label="閉じる" />
        </Row>
      </TitleBar>
      <MenuBar>{menus.map((m) => <button type="button" key={m}>{m}</button>)}</MenuBar>

      <ToolBar>
        {toolGroups.map((g) => (
          <ToolGroup key={g[0]}>
            {g.map((n) => <Tool key={n} n={n} s={12} on={n === "arrow"} color={n === "arrow" ? c.blue : undefined} label={n} />)}
          </ToolGroup>
        ))}
        <GhostGroup>
          <Tool n="axis" color="#1d3a58" label="ローカル軸" />
          <Tool n="axis" color="#3a3a3a" label="ワールド軸" />
          <Tool n="axisView" color="#3a3a3a" label="ビュー軸" />
        </GhostGroup>
        <Check><input type="checkbox" />スナップ</Check>
        <Tool n="snapEdge" w={24} s={10} label="エッジにスナップ" />
        <Tool n="snapGrid" w={10} s={10} color={c.value} label="グリッドにスナップ" />
        <Spacer />
        <Workspaces>
          <CurrentSpace type="button">デフォルト<Icon n="menu" s={7} color={c.value} /></CurrentSpace>
          {spaces.map((s) => <button type="button" key={s}>{s}</button>)}
          <Tool n="more" w={8} s={8} label="その他" />
        </Workspaces>
        <Tool n="badge" w={12} s={13} color="#c0c0c0" label="新機能" />
        <HelpSearch>
          <SearchBox><Icon n="search" s={8} /><input aria-label="ヘルプを検索" placeholder="ヘルプを検索" /></SearchBox>
        </HelpSearch>
      </ToolBar>

      <Main>
        <ProjectPanel>
          <ProjectTabs>
            <Tab $on $gap={6}>プロジェクト<Icon n="menu" s={6} /></Tab>
            <Tab><Swatch $c="#9a2f33" />エフェクトコントロール TEXT</Tab>
            <Spacer />
            <Tab><Icon n="more" s={7} /></Tab>
          </ProjectTabs>
          <CompInfo>
            <Thumb />
            <div>
              <Row $gap={2}>コンポ 1 <Icon n="caret" s={5} color="#ddd" /></Row>
              <div>1920 x 1080 (1.00)</div>
              <div>▵ 0:00:03:00, 30.00 fps</div>
            </div>
          </CompInfo>
          <ProjectSearch>
            <SearchBox><Icon n="searchMenu" s={11} /><input aria-label="プロジェクトを検索" /></SearchBox>
          </ProjectSearch>
          <ListHead>
            <span>名前</span><Icon n="up" s={8} color={c.blue} /><Tool n="tag" w={12} s={8} label="ラベル" />
          </ListHead>
          <ListItem>
            <Icon n="comp" s={11} /><ListName>コンポ 1</ListName><Tool n="flow" s={9} w={12} label="フローチャート" />
          </ListItem>
          <Spacer />
          <ProjectFoot>
            <Tool n="interpret" s={12} label="フッテージを変換" />
            <Tool n="folder" label="新規フォルダー" />
            <Tool n="comp" w={18} label="新規コンポジション" />
            <Tool n="adjust" w={18} label="プロジェクト設定" />
            <Depth type="button">32 bpc</Depth>
            <Tool n="trash" label="削除" />
            <Pill />
          </ProjectFoot>
        </ProjectPanel>

        <MidColumn>
          <CharPanel>
            <CharTitle>文字<Icon n="menu" s={6} /></CharTitle>
            <FontRows>
              <Stack>
                <Select w={80} value="A-OTF 新ゴ Pro" label="フォント" />
                <Select w={80} value="B" label="スタイル" />
              </Stack>
              <Stack>
                <Tool n="dropper" w={12} s={12} label="スポイト" />
                <BlackWhite type="button" aria-label="白黒" />
              </Stack>
              <Colors>
                <StrokeSwatch viewBox="0 0 18 18"><path d="M0 0h18v18H0Z" fill="#fff" /><path d="M6 5h6v7H6Z" fill="#161616" /><path d="M0 18 18 0" stroke="#d22" strokeWidth="2" /></StrokeSwatch>
                <FillSwatch type="button" aria-label="塗り" />
                <SwapButton type="button" aria-label="入れ替え"><Icon n="swap" s={9} /></SwapButton>
                <NoneSwatch viewBox="0 0 18 18"><path d="M0 0h18v18H0Z" fill="#ddd" /><path d="M0 18 18 0" stroke="#d22" strokeWidth="3" /></NoneSwatch>
              </Colors>
            </FontRows>
            <CharBlock>
              <Icon n="size" s={12} /><CharField v="118" u="px" /><Icon n="leading" s={12} /><CharField v="81" u="px" />
              <Icon n="kerning" s={12} /><Field><i>メトリクス</i><Icon n="caret" s={5} /></Field><Icon n="tracking" s={12} /><CharField v="50" />
            </CharBlock>
            <StrokeBlock>
              <Icon n="stroke" s={10} /><CharField v="-" u="px" /><Select w={75} value="" label="線の種類" bg="#1f1f1f" />
            </StrokeBlock>
            <CharBlock>
              <Icon n="vscale" s={12} /><CharField v="100" u="%" pull /><Icon n="hscale" s={12} /><CharField v="100" u="%" />
              <Icon n="baseline" s={12} /><CharField v="-8" u="px" pull /><Icon n="tsume" s={12} /><CharField v="0" u="%" />
            </CharBlock>
            <TypeStyles>
              <button type="button">T</button>
              <button type="button"><em>T</em></button>
              <button type="button">TT</button>
              <button type="button">T<small>T</small></button>
              <button type="button">T<sup>1</sup></button>
              <button type="button">T<sub>1</sub></button>
            </TypeStyles>
            <CheckRow>
              <Check><input type="checkbox" />合字</Check>
              <Check><input type="checkbox" />ヒンディー数字</Check>
            </CheckRow>
          </CharPanel>
          <Wingman>
            <WingHead>Keyframe Wingman<Icon n="menu" s={6} /></WingHead>
            <WingGrid>
              <Range type="range" aria-label="イーズアウト" defaultValue={40} $at={40} />
              <WingButton type="button" aria-label="リセット"><Icon n="reset" s={8} /></WingButton>
              <Range type="range" aria-label="イーズイン" defaultValue={60} $at={60} $flip />
              <WingNumber $end>60</WingNumber>
              <WingButton type="button" aria-label="リンク"><Icon n="link" s={9} /></WingButton>
              <WingNumber>60<em>i</em></WingNumber>
            </WingGrid>
          </Wingman>
        </MidColumn>

        <Viewer>
          <ViewerTabs>
            <Tab $on $gap={6}>
              <Icon n="closeTab" s={4} /><Swatch $c="#a5946f" /><Icon n="unlock" s={8} />
              <span>コンポジション<b>コンポ 1</b></span><Icon n="menu" s={6} />
            </Tab>
            <Tab>レイヤー (なし)</Tab>
          </ViewerTabs>
          <Crumbs><span>コンポ 1</span></Crumbs>
          <Stage><Canvas /></Stage>
          <ViewerFoot>
            <Tool n="preview" w={14} label="常にプレビュー" />
            <Tool n="monitor" w={14} label="プライマリビューア" />
            <Tool n="goggles" w={14} label="VR" />
            <Select w={44} value="(59.9 %)" label="拡大率" bg={c.panel} />
            <Tool n="region" w={14} label="グリッド" />
            <Tool n="mask" w={14} color={c.blue} label="マスク" />
            <TimeChip type="button">0:00:02:00</TimeChip>
            <Tool n="photo" w={14} label="スナップショット" />
            <Tool n="adjust" w={14} color="#3a3a3a" label="スナップショットを表示" />
            <Tool n="channels" w={12} label="チャンネル" />
            <FootSelects><Select w={55} value="フル画質" label="解像度" bg="#1e1e1e" /></FootSelects>
            <Tool n="safe" w={12} label="目標範囲" />
            <Tool n="checker" w={14} label="透明グリッド" />
            <FootSelects $gap={2}>
              <Select w={68} value="アクティブカメラ" label="ビュー" bg="#1e1e1e" />
              <Select w={43} value="1 画面" label="レイアウト" bg="#1e1e1e" />
            </FootSelects>
            <Tool n="pixel" w={14} label="ピクセル縦横比" />
            <Tool n="fast" w={14} on label="高速プレビュー" />
            <Tool n="timeline" w={14} label="タイムライン" />
            <Tool n="flow" w={14} s={9} label="フローチャート" />
            <Tool n="aperture" w={14} label="露光量" />
            <Exposure type="button">+0.0</Exposure>
          </ViewerFoot>
        </Viewer>

        <SideColumn>
          {sides.map((s) => <SideHead type="button" key={s}>{s}</SideHead>)}
          <SideHead type="button" $open>段落<Icon n="menu" s={6} /></SideHead>
          <ParaBody>
            <AlignRow>
              <Tool n="alignL" label="左揃え" color="#6c6c6c" />
              <Tool n="alignC" label="中央揃え" on color="#24609c" />
              <Tool n="alignR" label="右揃え" color="#6c6c6c" />
              <Tool n="justify" label="均等配置 左" color="#343434" />
              <Tool n="justify" label="均等配置 中央" color="#343434" />
              <Tool n="justify" label="均等配置 右" color="#343434" />
              <Tool n="justify" label="両端揃え" color="#343434" />
            </AlignRow>
            <ParaGrid>
              <Row $gap={3}><Icon n="indentL" /><Field><span><b>0</b>px</span></Field></Row>
              <Row $gap={3}><Icon n="before" /><Field><span><b>10</b>px</span></Field></Row>
              <Row $gap={3}><Icon n="first" /><Field><span><b>0</b>px</span></Field></Row>
              <Row $gap={3}><Icon n="indentR" /><Field><span><b>0</b>px</span></Field></Row>
              <Row $gap={3}><Icon n="after" /><Field><span><b>0</b>px</span></Field></Row>
              <Row $gap={3}><Tool n="ltr" w={13} on color={c.blue} label="左から右" /><Tool n="rtl" w={13} label="右から左" /></Row>
            </ParaGrid>
          </ParaBody>
          <SideHead type="button">トラッカー</SideHead>
          <SideHead type="button">コンテンツに応じた塗りつぶし</SideHead>
        </SideColumn>
      </Main>

      <Timeline>
        <TimelineTabs>
          <Tab>レンダーキュー</Tab>
          <Tab $on><Icon n="closeTab" s={4} /><Swatch $c="#a5946f" />コンポ 1<Icon n="menu" s={6} /></Tab>
        </TimelineTabs>
        <TimelineBody>
          <LayerSide>
            <LayerTop>
              <TimeCode type="button">0:00:02:00<small>00060 (30.00 fps)</small></TimeCode>
              <TimelineSearch>
                <SearchBox><Icon n="searchMenu" s={11} /><input aria-label="レイヤーを検索" /></SearchBox>
              </TimelineSearch>
              <CompTools>
                <Tool n="mini" w={20} label="ミニフローチャート" />
                <Tool n="cube" w={20} s={12} label="ドラフト 3D" />
                <Tool n="shy" s={11} w={18} label="シャイ" />
                <Tool n="frames" label="フレームブレンド" />
                <Tool n="blur" label="モーションブラー" />
                <Tool n="graph" w={22} s={11} label="グラフエディター" />
              </CompTools>
            </LayerTop>
            <LayerHead>
              <Cell $w={10}><Icon n="eye" /></Cell>
              <Cell $w={11}><Icon n="speaker" s={9} /></Cell>
              <Cell $w={10}><Icon n="dot" s={8} /></Cell>
              <Cell $w={20}><Icon n="lock" s={8} /></Cell>
              <Cell $w={17}><Icon n="tag" s={8} /></Cell>
              <Cell $w={20}><em>#</em></Cell>
              <Cell $w={181}>ソース名</Cell>
              <Cell $w={54} $line $p={4}>モード</Cell>
              <Cell $w={12} $small>T</Cell>
              <Cell $w={45} $small>トラックマット</Cell>
              <Cell $w={125} $line $p={4} $small>親とリンク</Cell>
              <Cell $w={9} $line />
            </LayerHead>
            <LayerRow>
              <Cell $w={21}><Icon n="eye" /></Cell>
              <Cell $w={25}><Switch type="button" aria-label="ソロ" /><Switch type="button" aria-label="ロック" /></Cell>
              <Cell $w={8}><Icon n="chevron" s={6} /></Cell>
              <Cell $w={14}><Svg viewBox="0 0 10 10" $s={10} $c="#9a2f33"><rect width="10" height="10" /></Svg></Cell>
              <Cell $w={20}>1</Cell>
              <Cell $w={10}><Icon n="glyphT" s={7} color="#c0c0c0" /></Cell>
              <NameBox>TEXT</NameBox>
              <Select w={48} value="通常" label="描画モード" bg="#202020" />
              <Cell $w={62} $p={3}><Switch type="button" aria-label="マット" /></Cell>
              <Cell $w={13}><Icon n="spiral" s={9} /></Cell>
              <Select w={109} value="なし" label="親とリンク" bg="#202020" />
            </LayerRow>
            <PropList>
              <PropRow>
                <Cell $w={58} /><Cell $w={13}><Icon n="chevronRight" s={6} /></Cell>
                <Cell $w={249}>テキスト</Cell><Cell $w={49}>アニメーター :</Cell><Icon n="play" s={8} color="#ccc" />
              </PropRow>
              <PropRow>
                <Cell $w={59} /><Cell $w={11}><Icon n="chevron" s={6} /></Cell>
                <Cell $w={200}>トランスフォーム</Cell><PropValue type="button">リセット</PropValue>
              </PropRow>
              {props.map((p) => (
                <PropRow key={p.name}>
                  <PropLead>
                    <Cell $w={80}>
                      {p.on && (
                        <>
                          <Cell $w={11}><Icon n="left" s={7} /></Cell>
                          <Cell $w={12}><Icon n="diamond" s={7} color={c.blue} /></Cell>
                          <Icon n="right" s={7} color="#4b4b4b" />
                        </>
                      )}
                    </Cell>
                    <Cell $w={p.on ? 13 : 11}><Icon n={p.on ? "watchOn" : "watch"} color={p.on ? c.blue : undefined} /></Cell>
                    {p.on && <Cell $w={12}><Icon n="graphOn" s={9} /></Cell>}
                    <PropName $on={p.on}>{p.name}</PropName>
                  </PropLead>
                  <PropValue type="button">{p.value}</PropValue>
                  <Cell $w={20} $p={4}><Icon n="spiral" s={9} /></Cell>
                </PropRow>
              ))}
            </PropList>
            <LayerEmpty><Note>アニメーションできる要素</Note></LayerEmpty>
            <LayerFoot>
              <Tool n="layers" w={12} s={9} label="レイヤースイッチ" />
              <Tool n="toggles" w={12} s={9} color={c.blue} label="転送制御" />
              <Tool n="braces" w={12} s={9} label="イン・アウト" />
              <ModeButton type="button">スイッチ / モード</ModeButton>
            </LayerFoot>
          </LayerSide>

          <TrackSide>
            <Tracks>
              <Bar $h={6} $c="#686868" />
              <Ruler>
                {marks.map((m, i) => <Mark key={i} style={{ left: `${(i * 100) / 9}%` }}>{m}</Mark>)}
              </Ruler>
              <Bar $h={11} $c="#606060" />
              <Cache />
              <LayerBar />
              <TimeSpan>
                <PropList>
                  {[0, 1, 2, 3, 4, 5, 6].map((i) => (
                    <TrackRow key={i}>
                      {i === 3 ? (
                        <>
                          <AtTime style={{ left: 0 }}><Icon n="diamond" s={6} color="#ccc" /></AtTime>
                          <AtTime style={{ left: current }}><Icon n="diamond" s={6} color={c.blue} /></AtTime>
                          <Ring style={{ left: 0 }} />
                          <RowNote>キーフレーム</RowNote>
                          <Ring style={{ left: current }} />
                        </>
                      ) : (
                        <AtTime style={{ left: current }}><Icon n="ibeam" s={9} color="#7c9ab5" /></AtTime>
                      )}
                    </TrackRow>
                  ))}
                </PropList>
              </TimeSpan>
              <TrackArea />
              <PlayLayer>
                <PlayHead style={{ left: current }}><Icon n="marker" s={9} color={c.blue} /></PlayHead>
              </PlayLayer>
            </Tracks>
            <Gutter><Icon n="marker" s={8} /><Icon n="camLayer" s={10} /></Gutter>
            <TrackFoot>
              <Tool n="hills" w={12} s={6} label="縮小" />
              <ZoomSlider type="range" aria-label="ズーム" defaultValue={5} />
              <Tool n="hills" w={12} s={10} label="拡大" />
            </TrackFoot>
          </TrackSide>
        </TimelineBody>
      </Timeline>
    </Shell>
  );
}
